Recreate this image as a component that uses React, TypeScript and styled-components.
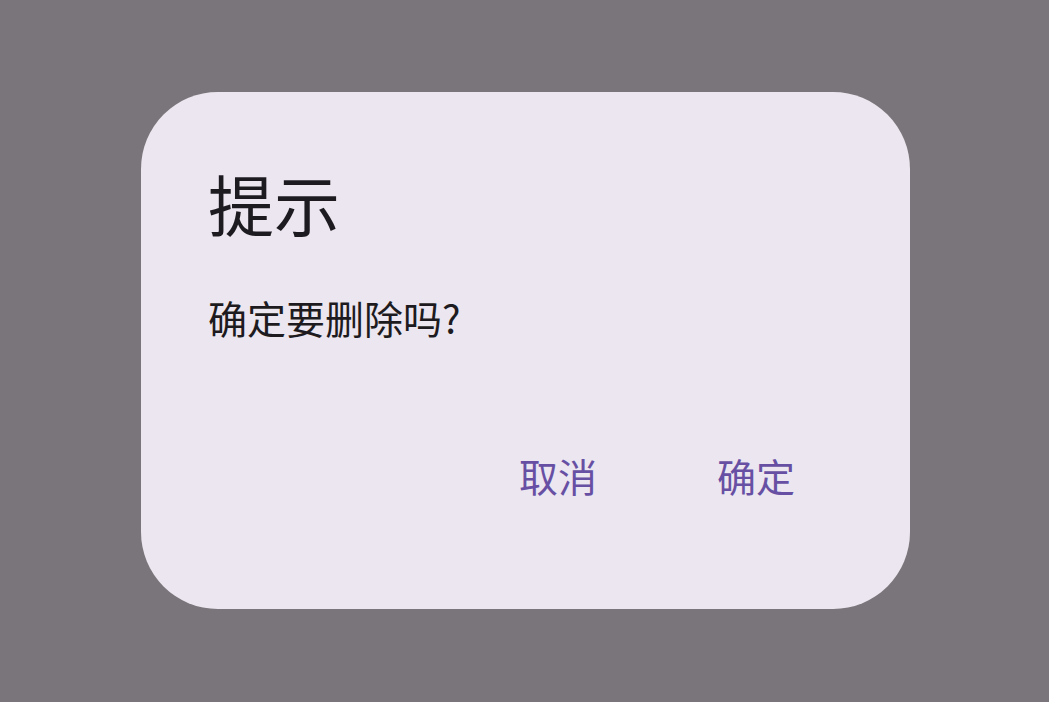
import { FunctionComponent } from "react";
import styled, { createGlobalStyle } from "styled-components";

const GlobalStyle = createGlobalStyle`
  html, body {
    margin: 0;
    padding: 0;
    height: 100%;
  }
  body {
    font-family: "Noto Sans CJK SC", "Noto Sans", sans-serif;
  }
  #root {
    height: 100%;
  }
`;

const Scrim = styled.div`
  width: 100%;
  height: 100%;
  min-height: 702px;
  background: #79757a;
  display: flex;
  align-items: flex-start;
  justify-content: center;
  padding-top: 92px;
  box-sizing: border-box;
`;

const Dialog = styled.div`
  width: 769px;
  height: 517px;
  box-sizing: border-box;
  background: #ece6f0;
  border-radius: 77px;
  padding: 66px 66px 0 67px;
  display: flex;
  flex-direction: column;
  margin-left: 2px;
`;

const Title = styled.h2`
  margin: 0;
  font-size: 66px;
  line-height: 88px;
  font-weight: 400;
  color: #1d1b20;
`;

const Body = styled.p`
  margin: 44px 0 0;
  font-size: 39px;
  line-height: 55px;
  color: #1d1b20;
`;

const Actions = styled.div`
  margin-top: 75px;
  display: flex;
  justify-content: flex-end;
  gap: 22px;
`;

const TextButton = styled.button`
  min-width: 176px;
  height: 110px;
  padding: 0 33px;
  border: none;
  background: transparent;
  border-radius: 55px;
  font-family: inherit;
  font-size: 39px;
  color: #6750a4;
  cursor: pointer;
`;

const App: FunctionComponent = () => {
  return (
    <>
      <GlobalStyle />
      <Scrim>
        <Dialog>
          <Title>提示</Title>
          <Body>确定要删除吗?</Body>
          <Actions>
            <TextButton>取消</TextButton>
            <TextButton>确定</TextButton>
          </Actions>
        </Dialog>
      </Scrim>
    </>
  );
};

export default App;
